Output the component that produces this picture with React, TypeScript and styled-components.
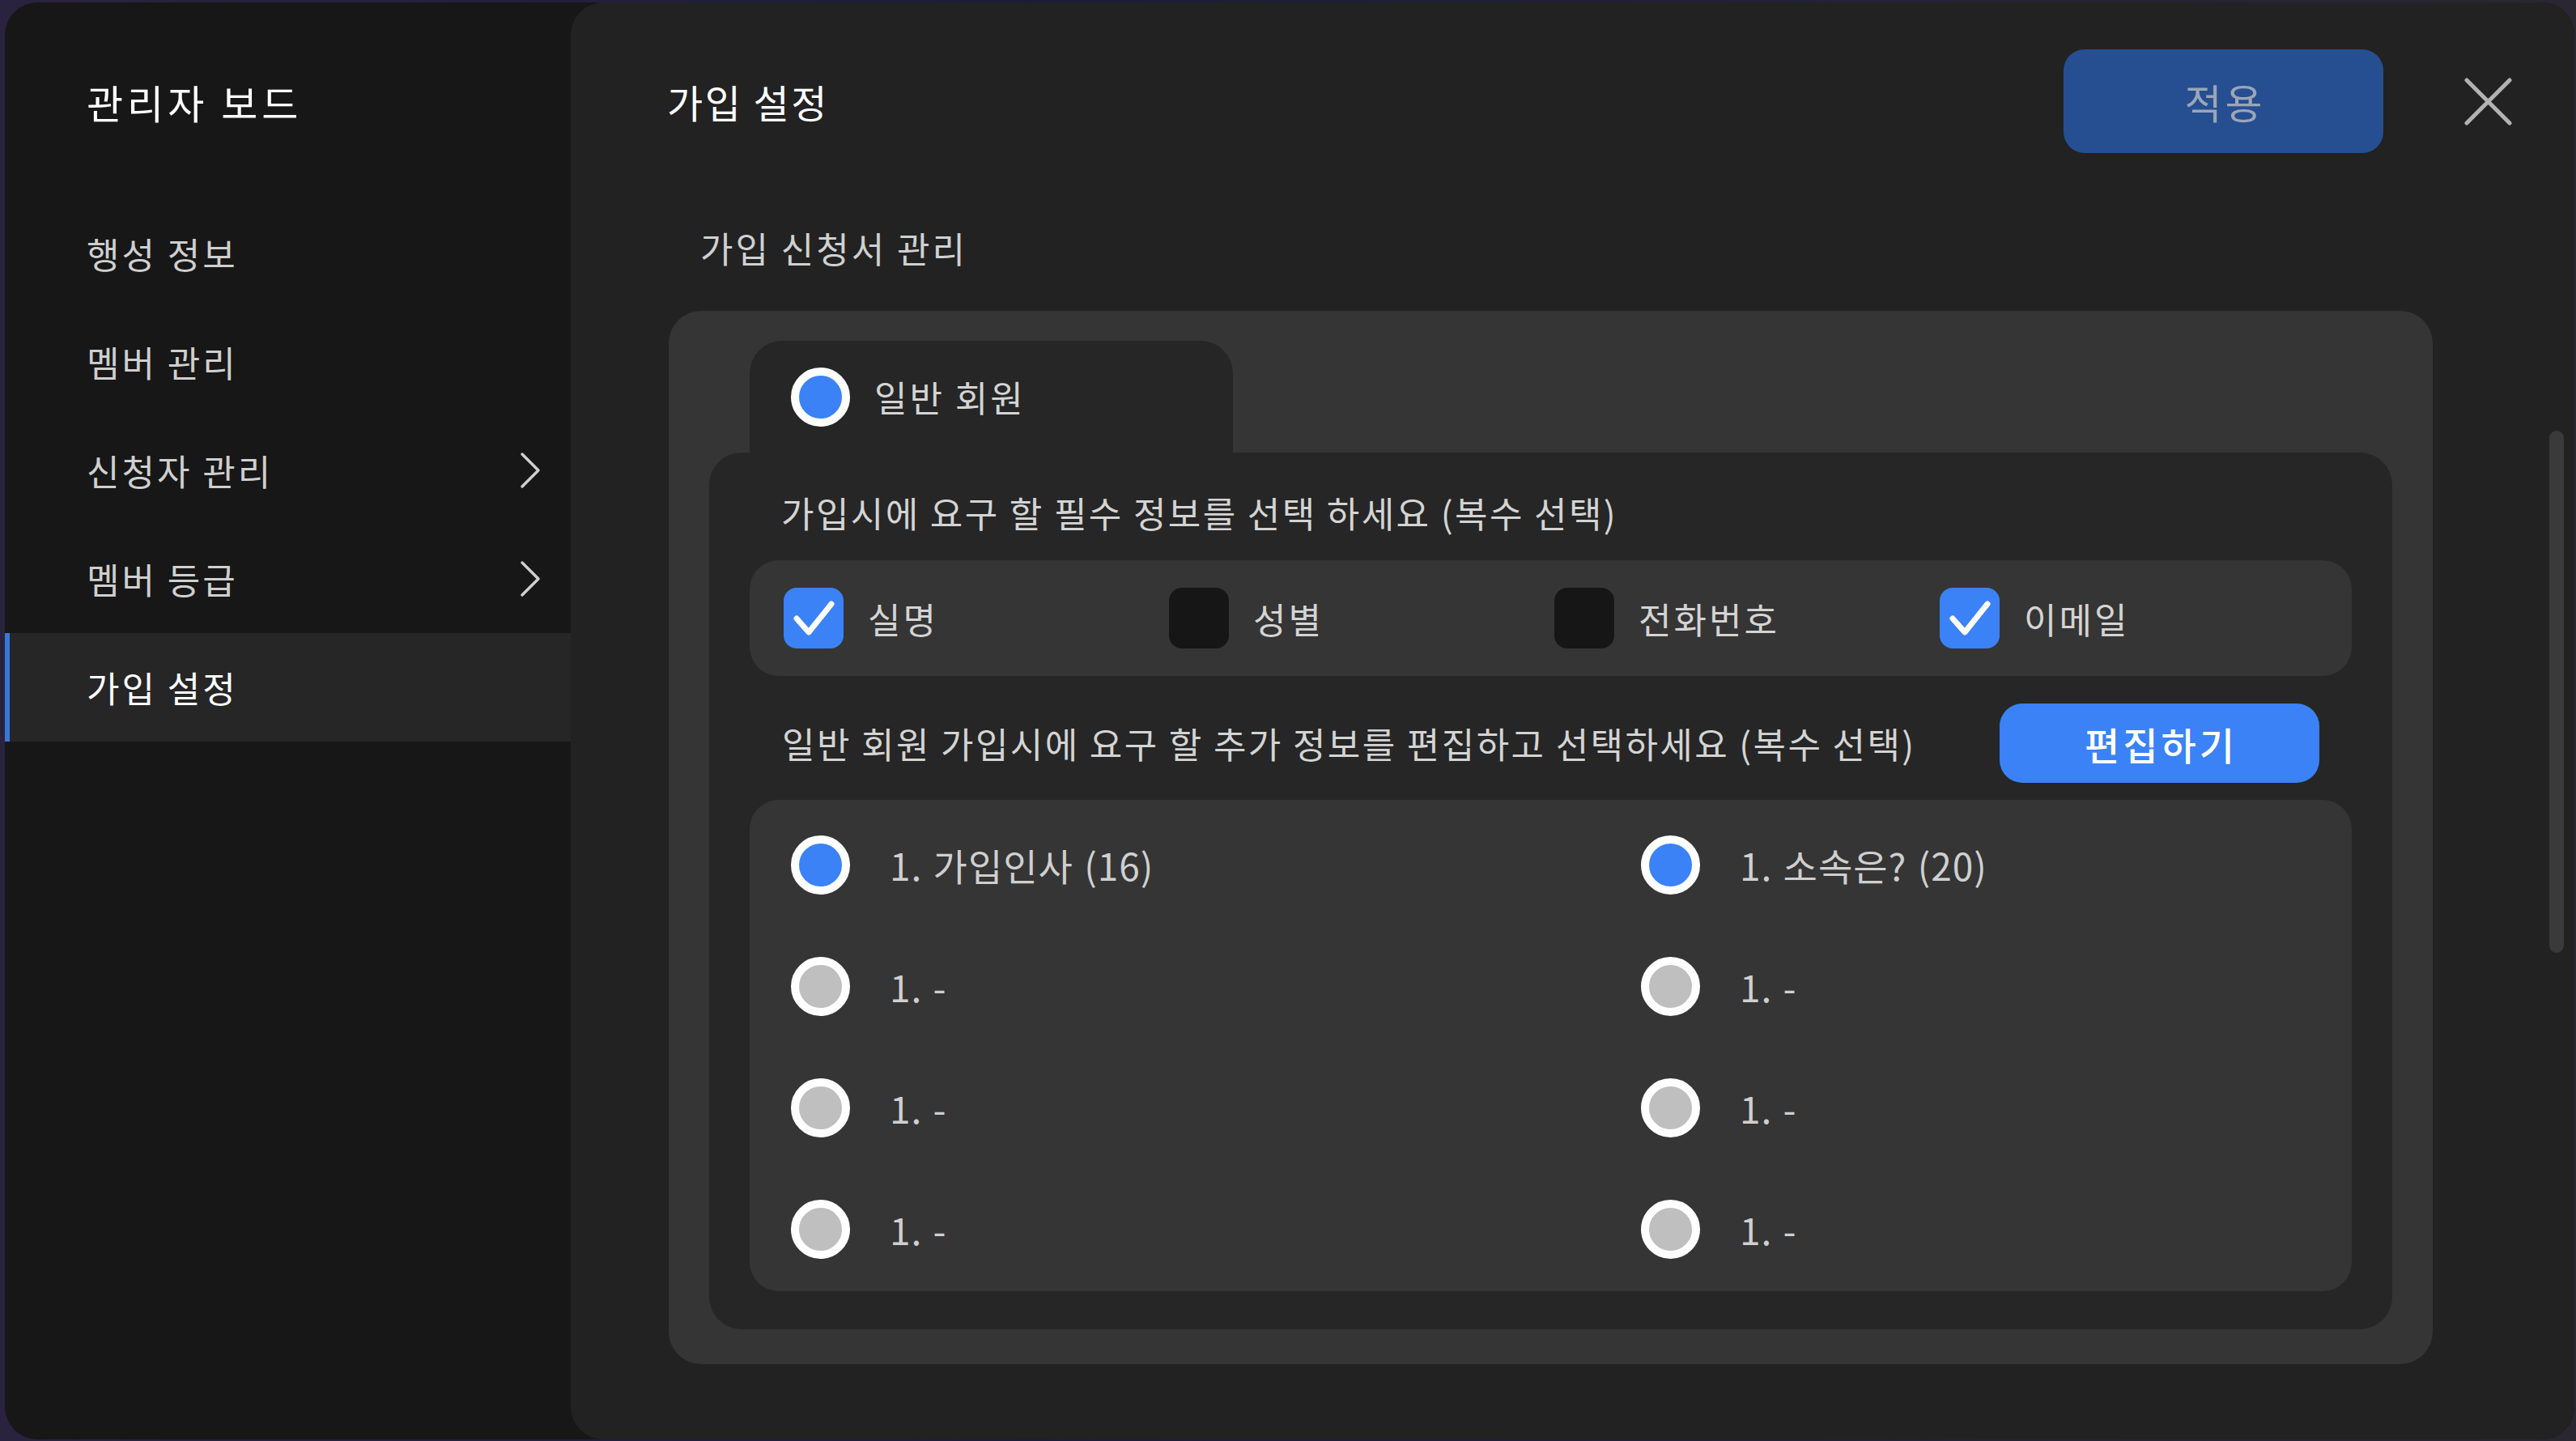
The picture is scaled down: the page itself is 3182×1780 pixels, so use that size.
import React from "react";
import styled, { createGlobalStyle } from "styled-components";

const Global = createGlobalStyle`
  html, body {
    margin: 0;
    padding: 0;
    background: #1e1d38;
  }
  body {
    font-family: "Noto Sans CJK KR", "Noto Sans", sans-serif;
  }
  * { box-sizing: border-box; }
`;

const Page = styled.div`
  width: 3182px;
  height: 1780px;
  padding: 3px 2px 2px 6px;
  display: flex;
  background: linear-gradient(90deg, #2a2340 0%, #1c1c3a 40%, #2a2632 100%);
`;

const Modal = styled.div`
  flex: 1;
  display: flex;
  background: #171717;
  border-radius: 40px;
  overflow: hidden;
`;

const Sidebar = styled.aside`
  width: 699px;
  flex-shrink: 0;
  display: flex;
  flex-direction: column;
  padding-top: 88px;
`;

const SideTitle = styled.div`
  padding-left: 101px;
  font-size: 49px;
  line-height: 70px;
  letter-spacing: 5px;
  color: #ffffff;
`;

const MenuList = styled.nav`
  margin-top: 85px;
  display: flex;
  flex-direction: column;
`;

const MenuItem = styled.div<{ $active?: boolean }>`
  height: 134px;
  display: flex;
  align-items: center;
  justify-content: space-between;
  padding: 0 37px 0 101px;
  font-size: 44px;
  letter-spacing: 3px;
  color: ${(p) => (p.$active ? "#ffffff" : "#cfcfcf")};
  background: ${(p) => (p.$active ? "#262626" : "transparent")};
  box-shadow: ${(p) => (p.$active ? "inset 6px 0 0 #3a78d6" : "none")};
`;

const Main = styled.main`
  flex: 1;
  position: relative;
  display: flex;
  flex-direction: column;
  background: #222222;
  border-radius: 40px;
  padding: 58px 76px 0 119px;
`;

const Header = styled.div`
  display: flex;
  align-items: center;
  height: 128px;
`;

const PageTitle = styled.h1`
  flex: 1;
  margin: 0;
  font-size: 48px;
  font-weight: 400;
  letter-spacing: 2.5px;
  color: #ffffff;
`;

const ApplyButton = styled.button`
  width: 395px;
  height: 128px;
  border: none;
  border-radius: 26px;
  background: #264f91;
  color: #9ca5b7;
  font-family: inherit;
  font-size: 50px;
  letter-spacing: 4px;
  text-indent: 4px;
`;

const CloseButton = styled.button`
  margin-left: 99px;
  width: 61px;
  height: 61px;
  padding: 0;
  border: none;
  background: transparent;
  display: flex;
`;

const SectionLabel = styled.div`
  margin-top: 85px;
  padding-left: 41px;
  font-size: 44px;
  line-height: 64px;
  letter-spacing: 3px;
  color: #d0d0d0;
`;

const Card = styled.section`
  margin: 46px 99px 0 2px;
  background: #353535;
  border-radius: 40px;
  padding: 37px 50px 43px;
`;

const Tab = styled.div`
  margin-left: 50px;
  width: 597px;
  height: 138px;
  background: #262626;
  border-radius: 40px 40px 0 0;
  display: flex;
  align-items: center;
  gap: 30px;
  padding-left: 51px;
  font-size: 44px;
  letter-spacing: 3px;
  color: #d4d4d4;
`;

const Radio = styled.span<{ $on?: boolean }>`
  width: 73px;
  height: 73px;
  flex-shrink: 0;
  border-radius: 50%;
  border: 10px solid #ffffff;
  background: ${(p) => (p.$on ? "#3b82f6" : "#bfbfbf")};
`;

const Panel = styled.div`
  background: #262626;
  border-radius: 40px;
  padding: 42px 50px 47px;
`;

const Desc = styled.div`
  font-size: 44px;
  line-height: 64px;
  letter-spacing: 2.4px;
  padding-left: 39px;
  color: #d4d4d4;
`;

const CheckRow = styled.div`
  margin-top: 27px;
  height: 143px;
  background: #353535;
  border-radius: 36px;
  display: grid;
  grid-template-columns: repeat(4, 476px);
  align-items: center;
  padding-left: 42px;
`;

const CheckItem = styled.label`
  display: flex;
  align-items: center;
  gap: 30px;
  font-size: 44px;
  letter-spacing: 3px;
  color: #d4d4d4;
`;

const CheckBox = styled.span<{ $on?: boolean }>`
  width: 74px;
  height: 75px;
  border-radius: 16px;
  background: ${(p) => (p.$on ? "#3b82f6" : "#161616")};
  display: flex;
  align-items: center;
  justify-content: center;
`;

const EditRow = styled.div`
  margin-top: 34px;
  height: 98px;
  display: flex;
  align-items: center;
  justify-content: space-between;
  padding: 0 40px;
  font-size: 44px;
  letter-spacing: 2.4px;
  color: #d4d4d4;
`;

const EditButton = styled.button`
  width: 395px;
  height: 98px;
  border: none;
  border-radius: 28px;
  background: #3b82f6;
  color: #ffffff;
  font-family: inherit;
  font-size: 47px;
  font-weight: 500;
  letter-spacing: 4px;
  text-indent: 4px;
`;

const Options = styled.div`
  margin-top: 21px;
  background: #353535;
  border-radius: 36px;
  display: grid;
  grid-template-columns: 1050px 1fr;
  grid-auto-rows: 150px;
  align-items: center;
  padding: 5px 0 2px 51px;
`;

const OptionItem = styled.div`
  display: flex;
  align-items: center;
  gap: 49px;
  font-size: 46px;
  letter-spacing: 1px;
  word-spacing: 2px;
  color: #cfcfcf;
`;

const ScrollThumb = styled.div`
  position: absolute;
  right: 13px;
  top: 529px;
  width: 18px;
  height: 645px;
  border-radius: 9px;
  background: #3a3a3a;
`;

const Chevron = () => (
  <svg width="26" height="46" viewBox="0 0 26 46" fill="none">
    <polyline
      points="3,3 23,23 3,43"
      stroke="#cfcfcf"
      strokeWidth="3.5"
      strokeLinecap="round"
      strokeLinejoin="round"
    />
  </svg>
);

const CloseIcon = () => (
  <svg width="61" height="61" viewBox="0 0 61 61" fill="none">
    <path
      d="M4 4 L57 57 M57 4 L4 57"
      stroke="#b3b3b3"
      strokeWidth="5"
      strokeLinecap="round"
    />
  </svg>
);

const CheckMark = () => (
  <svg width="74" height="75" viewBox="0 0 74 75" fill="none">
    <path
      d="M16 38 L31 55 L59 20"
      stroke="#ffffff"
      strokeWidth="7"
      strokeLinecap="round"
      strokeLinejoin="round"
    />
  </svg>
);

const menu = [
  { label: "행성 정보" },
  { label: "멤버 관리" },
  { label: "신청자 관리", chevron: true },
  { label: "멤버 등급", chevron: true },
  { label: "가입 설정", active: true },
];

const checks = [
  { label: "실명", on: true },
  { label: "성별", on: false },
  { label: "전화번호", on: false },
  { label: "이메일", on: true },
];

const options = [
  { label: "1. 가입인사 (16)", on: true },
  { label: "1. 소속은? (20)", on: true },
  { label: "1. -", on: false },
  { label: "1. -", on: false },
  { label: "1. -", on: false },
  { label: "1. -", on: false },
  { label: "1. -", on: false },
  { label: "1. -", on: false },
];

export default function App() {
  return (
    <>
      <Global />
      <Page>
        <Modal>
          <Sidebar>
            <SideTitle>관리자 보드</SideTitle>
            <MenuList>
              {menu.map((m) => (
                <MenuItem key={m.label} $active={m.active}>
                  <span>{m.label}</span>
                  {m.chevron && <Chevron />}
                </MenuItem>
              ))}
            </MenuList>
          </Sidebar>
          <Main>
            <Header>
              <PageTitle>가입 설정</PageTitle>
              <ApplyButton>적용</ApplyButton>
              <CloseButton aria-label="close">
                <CloseIcon />
              </CloseButton>
            </Header>
            <SectionLabel>가입 신청서 관리</SectionLabel>
            <Card>
              <Tab>
                <Radio $on />
                <span>일반 회원</span>
              </Tab>
              <Panel>
                <Desc>가입시에 요구 할 필수 정보를 선택 하세요 (복수 선택)</Desc>
                <CheckRow>
                  {checks.map((c) => (
                    <CheckItem key={c.label}>
                      <CheckBox $on={c.on}>{c.on && <CheckMark />}</CheckBox>
                      <span>{c.label}</span>
                    </CheckItem>
                  ))}
                </CheckRow>
                <EditRow>
                  <span>일반 회원 가입시에 요구 할 추가 정보를 편집하고 선택하세요 (복수 선택)</span>
                  <EditButton>편집하기</EditButton>
                </EditRow>
                <Options>
                  {options.map((o, i) => (
                    <OptionItem key={i}>
                      <Radio $on={o.on} />
                      <span>{o.label}</span>
                    </OptionItem>
                  ))}
                </Options>
              </Panel>
            </Card>
            <ScrollThumb />
          </Main>
        </Modal>
      </Page>
    </>
  );
}
